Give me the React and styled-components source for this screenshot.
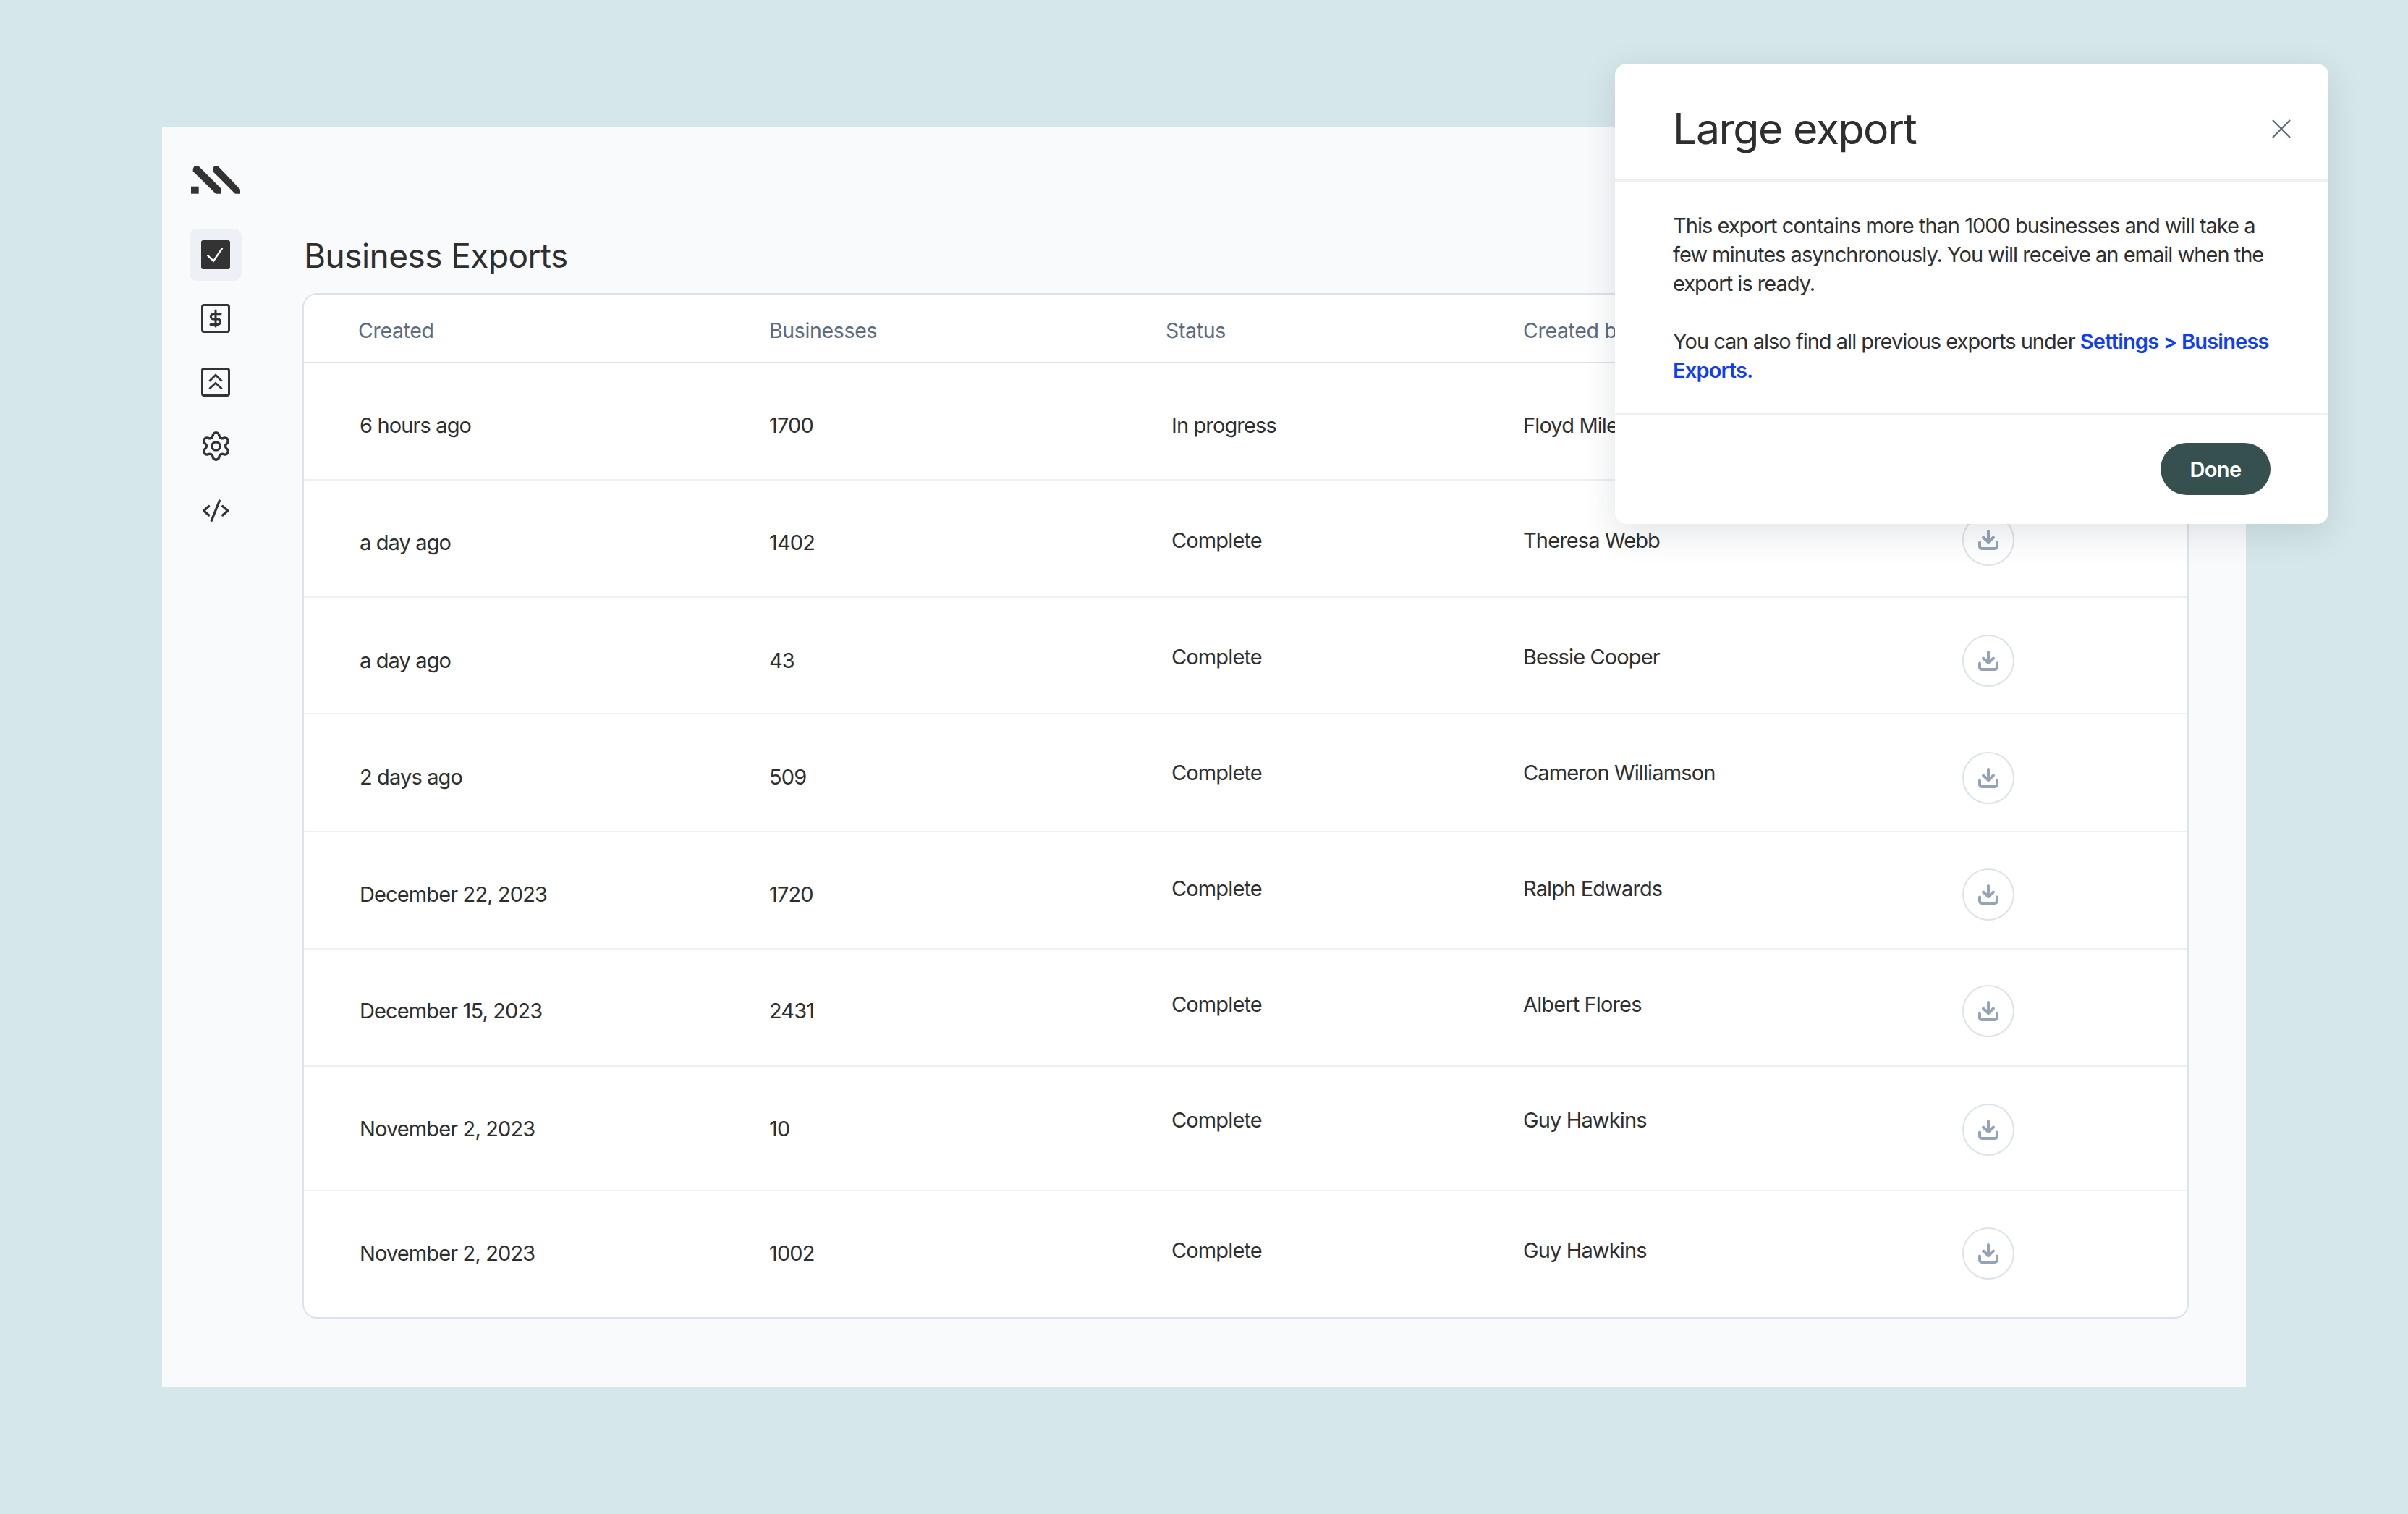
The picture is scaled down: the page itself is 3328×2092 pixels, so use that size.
import styled, { createGlobalStyle } from "styled-components";
import { Settings } from "lucide-react";

const GlobalStyle = createGlobalStyle`
  * { box-sizing: border-box; }
  html, body { margin: 0; padding: 0; }
  body {
    font-family: Inter, "Liberation Sans", sans-serif;
    color: #2e2e2e;
    background: #d5e7ea;
  }
`;

const Page = styled.div`
  position: relative;
  width: 3328px;
  height: 2092px;
  padding: 176px 0 0 224px;
  background: #d5e7ea;
  overflow: hidden;
`;

const Panel = styled.div`
  display: flex;
  width: 2880px;
  height: 1740px;
  background: #f9fafc;
`;

const Sidebar = styled.aside`
  display: flex;
  flex-direction: column;
  width: 194px;
  padding: 54px 0 0 38px;
`;

const Logo = styled.svg`
  display: block;
  width: 68px;
  height: 38px;
  margin: 0 0 48px 2px;
`;

const Nav = styled.nav`
  display: flex;
  flex-direction: column;
  gap: 16px;
`;

const NavItem = styled.div`
  display: flex;
  align-items: center;
  justify-content: center;
  width: 72px;
  height: 72px;
  border-radius: 10px;
  background: ${(p) => (p.$active ? "#edf0f4" : "transparent")};
  color: #333333;
`;

const Main = styled.main`
  width: 2607px;
  padding-top: 149px;
`;

const Title = styled.h1`
  margin: 0 0 24px 2px;
  font-size: 46px;
  line-height: 56px;
  font-weight: 400;
  letter-spacing: -0.012em;
  color: #2e2e2e;
`;

const Table = styled.div`
  height: 1417px;
  background: #ffffff;
  border: 2px solid #dce3eb;
  border-radius: 20px;
  overflow: hidden;
`;

const columns = "568px 548px 494px 607px 1fr";

const HeadRow = styled.div`
  display: grid;
  grid-template-columns: ${columns};
  align-items: center;
  height: 95px;
  padding: 6px 0 0 75px;
  border-bottom: 2px solid #dce3eb;
`;

const HeadCell = styled.div`
  font-size: 28.5px;
  line-height: 36px;
  letter-spacing: -0.012em;
  color: #5c6b7f;
`;

const Row = styled.div`
  display: grid;
  grid-template-columns: ${columns};
  align-items: start;
  height: ${(p) => p.$height}px;
  padding-left: 75px;
  border-bottom: ${(p) => (p.$last ? "none" : "2px solid #edf0f4")};
`;

const Cell = styled.div`
  padding-top: ${(p) => p.$top}px;
  padding-left: ${(p) => p.$indent || 0}px;
  font-size: 29px;
  line-height: 36px;
  letter-spacing: -0.03em;
  color: #2e2e2e;
`;

const ActionCell = styled.div`
  padding-top: ${(p) => p.$top}px;
`;

const DownloadButton = styled.button`
  display: flex;
  align-items: center;
  justify-content: center;
  width: 72px;
  height: 72px;
  padding: 0;
  background: #ffffff;
  border: 2px solid #dce3eb;
  border-radius: 50%;
  color: #94a3b8;
`;

const Modal = styled.section`
  position: absolute;
  top: 88px;
  left: 2232px;
  display: flex;
  flex-direction: column;
  width: 986px;
  height: 636px;
  background: #ffffff;
  border-radius: 16px;
  box-shadow: 0 12px 48px rgba(40, 60, 70, 0.14);
`;

const ModalHeader = styled.header`
  display: flex;
  align-items: center;
  justify-content: space-between;
  height: 164px;
  padding: 20px 52px 0 80px;
  border-bottom: 4px solid #edf0f4;
`;

const ModalTitle = styled.h2`
  margin: 0;
  font-size: 59px;
  line-height: 72px;
  font-weight: 400;
  letter-spacing: -0.025em;
  color: #2e2e2e;
`;

const CloseIcon = styled.svg`
  display: block;
  width: 26px;
  height: 26px;
  color: #5b6776;
`;

const ModalBody = styled.div`
  height: 322px;
  padding: 40px 76px 0 80px;
  border-bottom: 4px solid #edf0f4;
`;

const Paragraph = styled.p`
  margin: 0 0 40px;
  font-size: 29px;
  line-height: 40px;
  letter-spacing: -0.034em;
  color: #2e2e2e;
`;

const LinkText = styled.a`
  color: #0f3df5;
  font-weight: 600;
  letter-spacing: -0.028em;
`;

const ModalFooter = styled.footer`
  display: flex;
  justify-content: flex-end;
  padding: 38px 80px 0 0;
`;

const DoneButton = styled.button`
  width: 152px;
  height: 72px;
  padding: 0;
  background: #364f4f;
  border: none;
  border-radius: 36px;
  font-family: inherit;
  font-size: 29px;
  font-weight: 600;
  letter-spacing: -0.02em;
  color: #ffffff;
`;

const rows = [
  { created: "6 hours ago", count: "1700", status: "In progress", name: "Floyd Miles", height: 162, top: 68, metaTop: 68, actionTop: 51 },
  { created: "a day ago", count: "1402", status: "Complete", name: "Theresa Webb", height: 162, top: 68, metaTop: 65, actionTop: 46 },
  { created: "a day ago", count: "43", status: "Complete", name: "Bessie Cooper", height: 161, top: 69, metaTop: 64, actionTop: 51 },
  { created: "2 days ago", count: "509", status: "Complete", name: "Cameron Williamson", height: 163, top: 69, metaTop: 63, actionTop: 52 },
  { created: "December 22, 2023", count: "1720", status: "Complete", name: "Ralph Edwards", height: 162, top: 68, metaTop: 60, actionTop: 50 },
  { created: "December 15, 2023", count: "2431", status: "Complete", name: "Albert Flores", height: 162, top: 67, metaTop: 58, actionTop: 49 },
  { created: "November 2, 2023", count: "10", status: "Complete", name: "Guy Hawkins", height: 172, top: 68, metaTop: 56, actionTop: 51 },
  { created: "November 2, 2023", count: "1002", status: "Complete", name: "Guy Hawkins", height: 174, top: 68, metaTop: 64, actionTop: 50, last: true },
];

const LogoMark = () => (
  <Logo viewBox="0 0 68 38">
    <rect x="0" y="27.7" width="10.7" height="10" fill="#333333" />
    <path d="M2.7 3.3 4.3 0H11L41 30V37.7H34.3L2.7 6.7Z" fill="#333333" />
    <path d="M30 2 32 0H37.7L68 31.7V37.7H61L30 6.7Z" fill="#333333" />
  </Logo>
);

const CheckIcon = () => (
  <svg width="40" height="40" viewBox="0 0 40 40" fill="none">
    <rect width="40" height="40" rx="3" fill="#333333" />
    <path d="M8.7 20.7 17 28.7 29.3 10.7" stroke="#ffffff" strokeWidth="2.4" />
  </svg>
);

const DollarIcon = () => (
  <svg width="40" height="40" viewBox="0 0 40 40" fill="none" stroke="currentColor">
    <rect x="1.5" y="1.5" width="37" height="37" rx="2.5" strokeWidth="3" />
    <path
      d="M20 9V31M27 13.7H17A3.7 3.7 0 0 0 17 21.1H23.4A3.7 3.7 0 0 1 23.4 28.4H13"
      strokeWidth="3"
      strokeLinecap="round"
    />
  </svg>
);

const ChevronsIcon = () => (
  <svg width="40" height="40" viewBox="0 0 40 40" fill="none" stroke="currentColor">
    <rect x="1.5" y="1.5" width="37" height="37" rx="2.5" strokeWidth="3" />
    <path d="M11.3 18.7 20 10.3 28.7 18.7M11.3 29.3 20 21.3 28.7 29.3" strokeWidth="2.8" />
  </svg>
);

const CodeIcon = () => (
  <svg width="40" height="40" viewBox="0 0 40 40" fill="none" stroke="currentColor" strokeWidth="3.3" strokeLinecap="round" strokeLinejoin="round">
    <path d="M25.3 8 14.3 35.3" />
    <path d="M10.7 15.5 3.6 21.7 10.7 28" />
    <path d="M29.7 15.5 36.8 21.7 29.7 28" />
  </svg>
);

const DownloadIcon = () => (
  <svg width="28" height="28" viewBox="0 0 28 28" fill="none" stroke="currentColor" strokeWidth="4" strokeLinecap="round" strokeLinejoin="round">
    <path d="M14 2V17" />
    <path d="M7 10.5 14 17 21 10.5" />
    <path d="M2 17.5V23A3 3 0 0 0 5 26H23A3 3 0 0 0 26 23V17.5" />
  </svg>
);

const App = () => {
  return (
    <Page>
      <GlobalStyle />
      <Panel>
        <Sidebar>
          <LogoMark />
          <Nav>
            <NavItem $active><CheckIcon /></NavItem>
            <NavItem><DollarIcon /></NavItem>
            <NavItem><ChevronsIcon /></NavItem>
            <NavItem><Settings size={45} strokeWidth={1.8} /></NavItem>
            <NavItem><CodeIcon /></NavItem>
          </Nav>
        </Sidebar>
        <Main>
          <Title>Business Exports</Title>
          <Table>
            <HeadRow>
              <HeadCell>Created</HeadCell>
              <HeadCell>Businesses</HeadCell>
              <HeadCell>Status</HeadCell>
              <HeadCell>Created by</HeadCell>
            </HeadRow>
            {rows.map((row, index) => (
              <Row key={index} $height={row.height} $last={row.last}>
                <Cell $top={row.top} $indent={2}>{row.created}</Cell>
                <Cell $top={row.top}>{row.count}</Cell>
                <Cell $top={row.metaTop} $indent={8}>{row.status}</Cell>
                <Cell $top={row.metaTop}>{row.name}</Cell>
                <ActionCell $top={row.actionTop}>
                  <DownloadButton><DownloadIcon /></DownloadButton>
                </ActionCell>
              </Row>
            ))}
          </Table>
        </Main>
      </Panel>
      <Modal>
        <ModalHeader>
          <ModalTitle>Large export</ModalTitle>
          <CloseIcon viewBox="0 0 26 26" fill="none" stroke="currentColor" strokeWidth="2.2">
            <path d="M1 1 25 25M25 1 1 25" />
          </CloseIcon>
        </ModalHeader>
        <ModalBody>
          <Paragraph>
            This export contains more than 1000 businesses and will take a few minutes asynchronously. You will receive an email when the export is ready.
          </Paragraph>
          <Paragraph>
            You can also find all previous exports under <LinkText>Settings &gt; Business Exports.</LinkText>
          </Paragraph>
        </ModalBody>
        <ModalFooter>
          <DoneButton>Done</DoneButton>
        </ModalFooter>
      </Modal>
    </Page>
  );
};

export default App;
